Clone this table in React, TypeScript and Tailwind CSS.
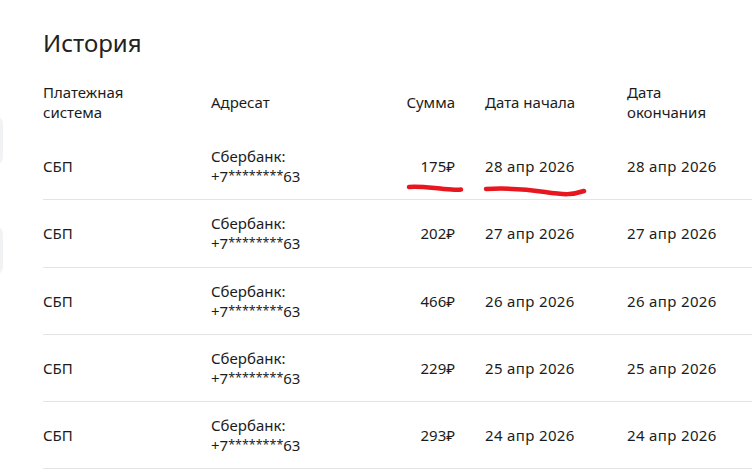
const rows = [
  { sum: '175₽', date: '28 апр 2026' },
  { sum: '202₽', date: '27 апр 2026' },
  { sum: '466₽', date: '26 апр 2026' },
  { sum: '229₽', date: '25 апр 2026' },
  { sum: '293₽', date: '24 апр 2026' },
];

const cols = 'grid grid-cols-[168px_184px_60px_30px_142px_160px]';

export default function App() {
  return (
    <div
      className="relative w-[752px] h-[474px] overflow-hidden bg-white text-[#1c1c1c]"
      style={{ fontFamily: '"Noto Sans", "Open Sans", sans-serif' }}
    >
      {/* cards peeking in from the left */}
      <div className="absolute left-[-20px] top-[116px] w-[23px] h-[49px] rounded-lg bg-[#f1f2f4]" />
      <div className="absolute left-[-20px] top-[226px] w-[23px] h-[49px] rounded-lg bg-[#f1f2f4]" />

      <div className="pl-[43px] pt-[27px]">
        <h1 className="text-[24px] leading-8 text-[#222]">История</h1>

        <div className="mt-[11px] w-[800px] text-[15px] leading-5">
          <div className={`${cols} h-[63px] items-center`}>
            <div>Платежная<br />система</div>
            <div>Адресат</div>
            <div className="text-right">Сумма</div>
            <div />
            <div>Дата начала</div>
            <div>Дата<br />окончания</div>
          </div>

          {rows.map((r) => (
            <div key={r.date} className={`${cols} h-[67.25px] items-center border-b border-[#e4e4e4]`}>
              <div>СБП</div>
              <div>
                Сбербанк:<br />+7<span className="text-[12.5px] align-[2px]">********</span>63
              </div>
              <div className="text-right">{r.sum}</div>
              <div />
              <div className="tracking-[0.35px]">{r.date}</div>
              <div className="tracking-[0.35px]">{r.date}</div>
            </div>
          ))}
        </div>
      </div>

      {/* hand-drawn red marks */}
      <svg className="absolute inset-0 pointer-events-none" width="752" height="474">
        <g fill="none" stroke="#e8161e" strokeWidth="4.5" strokeLinecap="round" strokeLinejoin="round">
          <path d="M409 187 C 420 186, 432 188, 444 189 S 458 190, 461 189.5" />
          <path d="M486 189 C 505 188, 525 189, 545 192 S 572 195, 584 191" />
        </g>
      </svg>
    </div>
  );
}
